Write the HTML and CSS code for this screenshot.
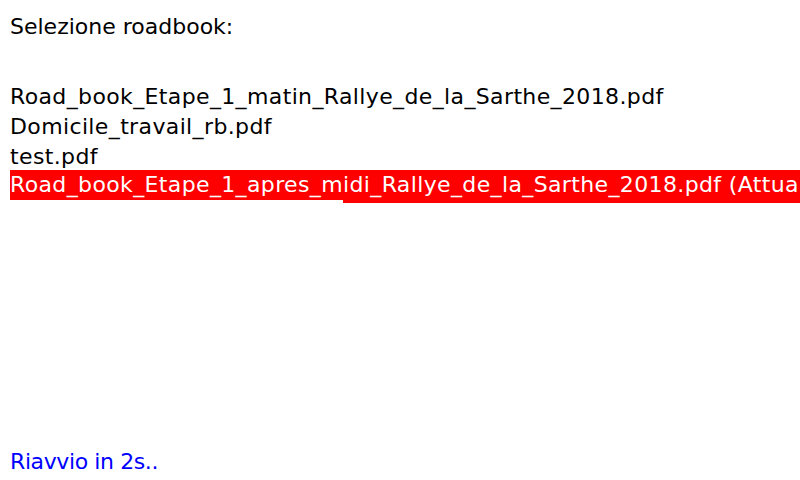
FILE: index.html
```html
<!DOCTYPE html>
<html lang="it">
<head>
<meta charset="utf-8">
<link rel="stylesheet" href="styles.css">
</head>
<body>
<div class="screen">
  <div class="title">Selezione roadbook:</div>
  <ul class="list">
    <li>Road_book_Etape_1_matin_Rallye_de_la_Sarthe_2018.pdf</li>
    <li>Domicile_travail_rb.pdf</li>
    <li>test.pdf</li>
    <li class="sel"><span class="hl a">Road_book_Etape_1_apres_m</span><span class="hl b">idi_Rallye_de_la_Sarthe_2018.pdf (Attuale)</span></li>
  </ul>
  <div class="footer">Riavvio in 2s..</div>
</div>
</body>
</html>
```
FILE: styles.css
```css
html, body {
  margin: 0;
  padding: 0;
  background: #fff;
  overflow: hidden;
}
.screen {
  width: 800px;
  height: 480px;
  box-sizing: border-box;
  padding: 12px 0 3px 10px;
  display: flex;
  flex-direction: column;
  font-family: "DejaVu Sans", sans-serif;
  font-size: 22px;
  line-height: 30px;
  color: #000;
  white-space: nowrap;
  overflow: hidden;
}
.title {
  height: 30px;
}
.list {
  list-style: none;
  margin: 40px 0 0 0;
  padding: 0;
  letter-spacing: 0.37px;
}
.list li {
  height: 30px;
}
.hl {
  display: inline-block;
  vertical-align: top;
  background: #ff0000;
  color: #fff;
  margin-top: -2px;
  height: 30px;
}
.hl.b {
  height: 33px;
}
.footer {
  margin-top: auto;
  color: #0000ff;
  letter-spacing: -0.4px;
}
```
